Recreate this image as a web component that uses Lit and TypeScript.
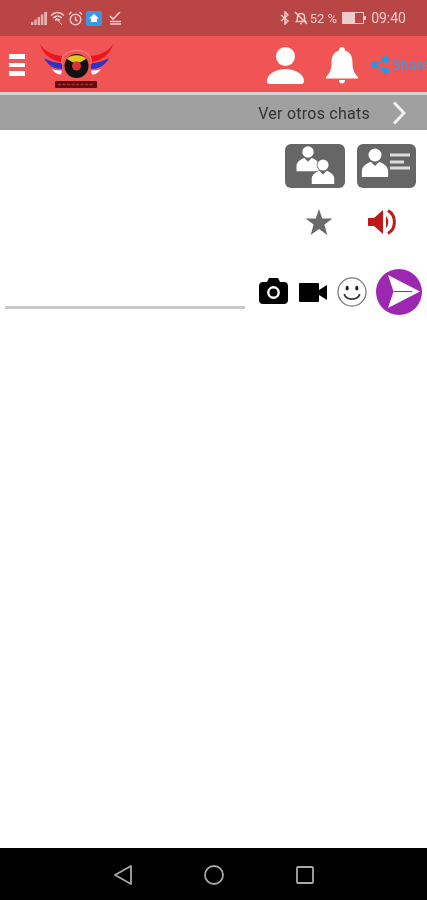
import { LitElement, html, css, svg } from "lit";
import { customElement } from "lit/decorators.js";

const person = (cx: number, cy: number, s: number, outline = false) => svg`
  <g transform="translate(${cx} ${cy}) scale(${s})" fill="#fff" stroke="${outline ? "#666" : "none"}" stroke-width="${outline ? 1.6 : 0}" paint-order="stroke">
    <path d="M-12.500 21v-6c0-4 4.500-7 8.500-8.500l4 4 4-4c4 1.500 8.500 4.500 8.500 8.500v6z" stroke-linejoin="round"/>
    <circle cx="0" cy="0" r="6.200"/>
  </g>`;

@customElement("app-root")
export class AppRoot extends LitElement {
  static styles = css`
    :host { display: flex; flex-direction: column; width: 427px; height: 900px; background: #fff; overflow: hidden; font-family: Roboto, "Liberation Sans", sans-serif; }
    svg { display: block; flex: none; }
    .status { height: 36px; background: #b94545; display: flex; align-items: center; color: #efcccc; font-size: 13px; padding-left: 31px; padding-right: 21px; flex: none; }
    .status-left { display: flex; align-items: center; gap: 3px; filter: blur(0.5px); }
    .check { margin-left: 4px; }
    .status-right { margin-left: auto; display: flex; align-items: center; filter: blur(0.5px); }
    .pct { margin-left: 2px; margin-right: 5px; }
    .mute { margin-left: 4px; }
    .time { font-size: 14px; margin-left: 4px; }
    .header { height: 56px; background: #f05454; display: flex; align-items: center; flex: none; overflow: hidden; }
    .menu { margin-left: 9px; width: 16px; display: flex; flex-direction: column; gap: 4px; margin-top: 2px; flex: none; }
    .menu span { height: 4.500px; background: #fff; display: block; }
    .logo { margin-left: 15px; margin-top: 3px; filter: blur(0.6px); }
    .user { margin-left: 154px; margin-top: 3px; }
    .bell { margin-left: 22px; margin-top: 3px; }
    .share { margin-left: 13px; margin-top: 2px; }
    .share-label { color: #3f9bdc; font-size: 14.500px; margin-left: 3px; white-space: nowrap; margin-top: 2px; filter: blur(0.3px); }
    .rule { height: 3px; background: #d9d2d2; flex: none; }
    .bar { height: 35px; background: #a0a0a0; display: flex; align-items: center; justify-content: flex-end; flex: none; padding-right: 21px; }
    .bar-label { font-size: 16px; color: #333; margin-right: 22px; letter-spacing: .25px; padding-top: 1px; filter: blur(0.4px); }
    .content { flex: 1; display: flex; flex-direction: column; }
    .cards { display: flex; justify-content: flex-end; gap: 12px; padding: 14px 11px 0 0; }
    .card { width: 60px; height: 44px; background: #666; border-radius: 6px; }
    .card.narrow { width: 59px; }
    .actions { display: flex; justify-content: flex-end; align-items: center; gap: 35px; padding: 21px 30px 0 0; }
    .composer { display: flex; align-items: flex-start; margin-top: 34px; padding-left: 5px; }
    .input { width: 240px; height: 3px; background: #c9c9c9; margin-top: 37px; flex: none; }
    .tools { margin-left: 14px; display: flex; margin-top: 9px; }
    .video { margin-left: 11px; margin-top: 5px; }
    .smile { margin-left: 10px; margin-top: -1px; }
    .send { margin-left: 9px; margin-top: -9px; }
    .nav { height: 51px; background: #000; flex: none; display: flex; align-items: center; justify-content: center; gap: 72px; padding-top: 1px; padding-left: 1px; }
  `;

  render() {
    return html`
      <div class="status">
        <div class="status-left">
          <svg width="16" height="13" viewBox="0 0 16 13" fill="#e6b0b0"><path d="M0 13h2.500v-3H0zM3.300 13h2.500V7.500H3.300zM6.600 13h2.500V5H6.600zM9.900 13h2.500V2.500H9.900zM13.200 13H16V0h-2.800z"/></svg>
          <svg width="15" height="14" viewBox="0 0 15 14" fill="none" stroke="#f0c8c8" stroke-width="1.500"><path d="M1 4.500c4-4 9-4 13 0M3 7c3-2.700 6-2.700 9 0M5 9.300c2-1.300 3.500-1.300 5 0"/><path d="M5 6l7 8" stroke-width="1"/></svg>
          <svg width="15" height="15" viewBox="0 0 15 15" fill="none" stroke="#f0c8c8" stroke-width="1.500"><circle cx="7.500" cy="8.500" r="5.300"/><path d="M7.500 5.500v3.300l2 1.200M1 3.500 3.500 1M14 3.500 11.500 1"/></svg>
          <svg width="16" height="15" viewBox="0 0 16 15"><rect width="16" height="15" rx="2" fill="#3b97e3"/><path d="M8 3 3 7.500h2V11h6V7.500h2z" fill="#fff"/></svg>
          <svg class="check" width="13" height="14" viewBox="0 0 13 14" fill="none" stroke="#f0c8c8" stroke-width="1.700"><path d="M1 5l3 3 7-7M1 10.500h11M1 13h11"/></svg>
        </div>
        <div class="status-right">
          <svg width="10" height="14" viewBox="0 0 10 14" fill="none" stroke="#efcccc" stroke-width="1.500"><path d="M1 4l7 6L5 13V1l3 3L1 10"/></svg>
          <svg class="mute" width="14" height="14" viewBox="0 0 14 14" fill="none" stroke="#efcccc" stroke-width="1.500"><path d="M2.500 10.500c1-1 1-2.500 1-4.500 0-2 1.500-3.500 3.500-3.500S10.500 4 10.500 6c0 2 0 3.500 1 4.500zM6 12.500h2M1 1l12 12"/></svg>
          <span class="pct">52 %</span>
          <svg width="25" height="12" viewBox="0 0 25 12"><rect x=".5" y=".5" width="21" height="11" fill="none" stroke="#efcccc"/><rect x="1" y="1" width="12" height="10" fill="#efcccc"/><rect x="22" y="4" width="2" height="4" fill="#efcccc"/></svg>
          <span class="time">09:40</span>
        </div>
      </div>

      <div class="header">
        <div class="menu"><span></span><span></span><span></span></div>
        <svg class="logo" width="73" height="46" viewBox="0 0 73 46">
          <path d="M0 1C4 8 12 12 22 13v6C12 18 3 12 0 1z" fill="#ee141c"/>
          <path d="M73 1C69 8 61 12 51 13v6c10-1 19-7 22-18z" fill="#ee141c"/>
          <path d="M4 15c5 3 12 5 18 5v6C15 26 8 23 4 15z" fill="#2a32d0"/>
          <path d="M69 15c-5 3-12 5-18 5v6c7 0 14-3 18-11z" fill="#2a32d0"/>
          <path d="M12 26c3 1 7 1.500 10 1.500l-1 4c-4 0-7-2-9-5.500z" fill="#fff"/>
          <path d="M61 26c-3 1-7 1.500-10 1.500l1 4c4 0 7-2 9-5.500z" fill="#fff"/>
          <path d="M22 21C18 3 55 3 51 21" fill="none" stroke="#ee9090" stroke-width="1"/>
          <circle cx="36.500" cy="23" r="12" fill="#111"/>
          <path d="M27 16c3-5 16-5 19 0l-6 3.500c-2-1-5-1-7 0z" fill="#e5c62a"/>
          <circle cx="36.500" cy="23" r="4.500" fill="#d8343a"/>
          <rect x="15" y="38" width="42" height="7" rx="1" fill="#5c1012"/>
          <path d="M18 41.500h36" stroke="#b02a2a" stroke-width="1.500" stroke-dasharray="3 1.500"/>
        </svg>
        <svg class="user" width="37" height="37" viewBox="0 0 37 37" fill="#fff">
          <circle cx="18.500" cy="9.500" r="9.500"/>
          <path d="M0 34c0-7 9-12 18.500-12S37 27 37 34c0 2-1 3-3 3H3c-2 0-3-1-3-3z"/>
        </svg>
        <svg class="bell" width="32" height="37" viewBox="0 0 32 37" fill="#fff">
          <path d="M16 0c2 0 3 1.500 3 3.500C24.500 5 26.500 10 26.500 16c0 7 2 10.500 5.500 14v1.500H0V30c3.500-3.500 5.500-7 5.500-14C5.500 10 7.500 5 13 3.500 13 1.500 14 0 16 0z"/>
          <path d="M13 33h6c0 2-1.200 3.500-3 3.500s-3-1.500-3-3.500z"/>
        </svg>
        <svg class="share" width="18" height="18" viewBox="0 0 18 18" fill="#2f95df">
          <circle cx="14.500" cy="3.500" r="3.500"/><circle cx="3.500" cy="9" r="3.500"/><circle cx="14.500" cy="14.500" r="3.500"/>
          <path d="M3.500 9l11-5.500M3.500 9l11 5.500" stroke="#2f95df" stroke-width="1.800"/>
        </svg>
        <span class="share-label">Share</span>
      </div>
      <div class="rule"></div>
      <div class="bar">
        <span class="bar-label">Ver otros chats</span>
        <svg width="14" height="24" viewBox="0 0 14 24" fill="none" stroke="#f2f2f2" stroke-width="3"><path d="M2 1.500 12 12 2 22.500"/></svg>
      </div>

      <div class="content">
        <div class="cards">
          <svg class="card" viewBox="0 0 60 44">
            ${person(23, 8, 0.92)}
            ${person(38, 21, 0.9, true)}
          </svg>
          <svg class="card narrow" viewBox="0 0 59 44">
            ${person(18, 11, 1.05)}
            <path d="M33 9.500h20v3H33zM33 16.500h14v3H33zM33 22.500h20v3H33z" fill="#ddd"/>
          </svg>
        </div>
        <div class="actions">
          <svg width="28" height="26" viewBox="0 0 28 27" fill="#6b6b6b"><path d="M14 0l3.400 9.800H28l-8.400 6.400 3 10.800L14 20.800 5.400 27l3-10.800L0 9.800h10.600z"/></svg>
          <svg width="29" height="26" viewBox="0 0 29 26">
            <path d="M0 9h6L15 1v24L6 17H0z" fill="#bd1a1a"/>
            <path d="M18 7c3 3 3 9 0 12z" fill="#bd1a1a"/>
            <path d="M20 1.500c8.500 5 8.500 18 0 23" fill="none" stroke="#bd1a1a" stroke-width="3"/>
          </svg>
        </div>
        <div class="composer">
          <div class="input"></div>
          <div class="tools">
            <svg width="29" height="26" viewBox="0 0 29 26">
              <path d="M4 4h4l2-4h9l2 4h4c2.500 0 4 1.500 4 4v14c0 2.500-1.500 4-4 4H4c-2.500 0-4-1.500-4-4V8c0-2.500 1.500-4 4-4z" fill="#000"/>
              <circle cx="14.500" cy="14.500" r="5.200" fill="none" stroke="#fff" stroke-width="2.400"/>
            </svg>
            <svg class="video" width="28" height="19" viewBox="0 0 28 19">
              <rect width="20" height="19" rx="1" fill="#000"/>
              <path d="M20 7l8-5v15l-8-5z" fill="#000"/>
            </svg>
            <svg class="smile" width="30" height="30" viewBox="0 0 31 31" fill="none" stroke="#333">
              <circle cx="15.500" cy="15.500" r="14.500" stroke="#777" stroke-width="1.300"/>
              <ellipse cx="10.500" cy="11.500" rx="1.600" ry="2.400" fill="#222" stroke="none"/>
              <ellipse cx="20.500" cy="11.500" rx="1.600" ry="2.400" fill="#222" stroke="none"/>
              <path d="M7.500 17.500c2 7 14 7 16 0" stroke-width="1.800"/>
            </svg>
            <svg class="send" width="46" height="46" viewBox="0 0 46 46">
              <circle cx="23" cy="23" r="23" fill="#9c27b0"/>
              <path d="M12 6l32 16.500L12 39l5.500-16.500z" fill="#fff"/>
              <path d="M17.500 22.500H36" stroke="#9c27b0" stroke-width="1"/>
            </svg>
          </div>
        </div>
      </div>

      <div class="nav">
        <svg width="18" height="20" viewBox="0 0 18 20" fill="none" stroke="#a8a8a8" stroke-width="1.800" stroke-linejoin="round"><path d="M17 1v18L1 10z"/></svg>
        <svg width="20" height="20" viewBox="0 0 20 20" fill="none" stroke="#a8a8a8" stroke-width="1.800"><circle cx="10" cy="10" r="9"/></svg>
        <svg width="18" height="18" viewBox="0 0 18 18" fill="none" stroke="#a8a8a8" stroke-width="1.800"><rect x="1" y="1" width="16" height="16" rx="1"/></svg>
      </div>
    `;
  }
}
